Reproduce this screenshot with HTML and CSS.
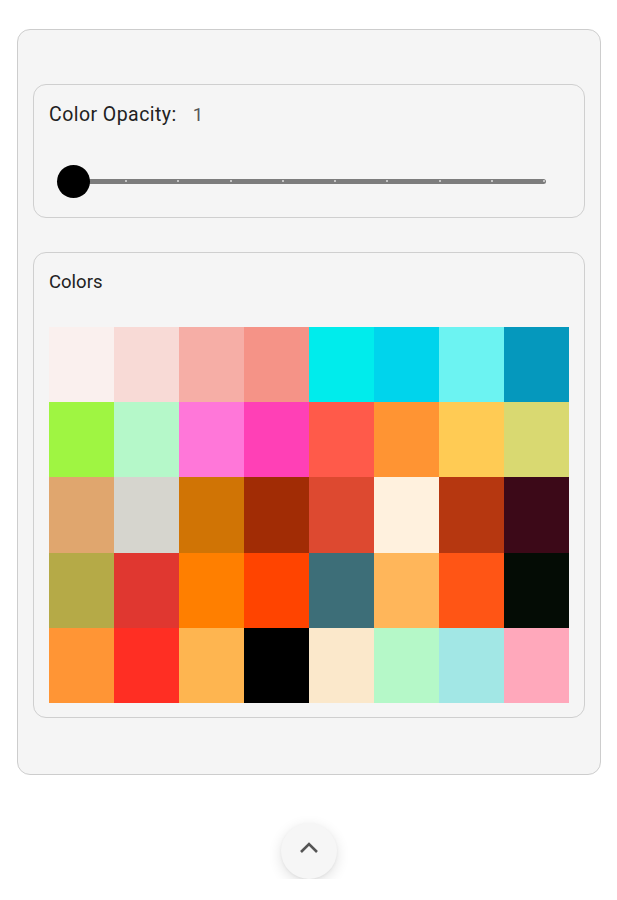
FILE: index.html
```html
<!DOCTYPE html>
<html>
<head>
<meta charset="utf-8">
<link rel="stylesheet" href="styles.css">
</head>
<body>
<div class="panel">
  <section class="card opacity-card">
    <div class="label-row"><span class="label label-lg">Color Opacity:</span><span class="value">1</span></div>
    <div class="slider">
      <div class="track">
        <div class="ticks">
          <i></i><i></i><i></i><i></i><i></i><i></i><i></i><i></i><i></i><i></i>
        </div>
      </div>
      <div class="thumb"></div>
    </div>
  </section>
  <section class="card colors-card">
    <div class="label">Colors</div>
    <div class="grid">
      <div style="background:#faf0ee"></div>
      <div style="background:#f8dad6"></div>
      <div style="background:#f6aea6"></div>
      <div style="background:#f59387"></div>
      <div style="background:#00ecec"></div>
      <div style="background:#00d4ec"></div>
      <div style="background:#6cf3f2"></div>
      <div style="background:#0598bd"></div>

      <div style="background:#9ff542"></div>
      <div style="background:#b5f8c9"></div>
      <div style="background:#ff77d9"></div>
      <div style="background:#ff40b6"></div>
      <div style="background:#ff5a4a"></div>
      <div style="background:#ff9433"></div>
      <div style="background:#ffcb54"></div>
      <div style="background:#d9d971"></div>

      <div style="background:#e0a66e"></div>
      <div style="background:#d6d5ce"></div>
      <div style="background:#d07405"></div>
      <div style="background:#a12c05"></div>
      <div style="background:#dd4930"></div>
      <div style="background:#fff1de"></div>
      <div style="background:#b63710"></div>
      <div style="background:#3c0918"></div>

      <div style="background:#b5aa47"></div>
      <div style="background:#e03730"></div>
      <div style="background:#ff7f00"></div>
      <div style="background:#ff4400"></div>
      <div style="background:#3d6e78"></div>
      <div style="background:#ffb65a"></div>
      <div style="background:#ff5515"></div>
      <div style="background:#040c05"></div>

      <div style="background:#ff9535"></div>
      <div style="background:#ff2e23"></div>
      <div style="background:#feb550"></div>
      <div style="background:#000000"></div>
      <div style="background:#fbe8cb"></div>
      <div style="background:#b5f8c8"></div>
      <div style="background:#a2e7e5"></div>
      <div style="background:#ffa8bb"></div>
    </div>
  </section>
</div>
<div class="fab-row">
  <button class="fab" aria-label="Collapse">
    <svg width="24" height="24" viewBox="0 0 24 24"><polyline points="4,16 12,8 20,16" fill="none" stroke="#555" stroke-width="2.6" stroke-linecap="butt" stroke-linejoin="miter"/></svg>
  </button>
</div>
</body>
</html>
```
FILE: styles.css
```css
* { box-sizing: border-box; }
html, body { margin: 0; padding: 0; background: #ffffff; }
body {
  font-family: Roboto, "Noto Sans", sans-serif;
  color: #222;
  width: 617px;
}
.panel {
  margin: 29px 16px 0 17px;
  height: 746px;
  border: 1px solid #cdcdcd;
  border-radius: 13px;
  background: #f5f5f5;
  padding: 54px 15px 0 15px;
  display: flex;
  flex-direction: column;
  gap: 34px;
}
.card {
  border: 1px solid #cfcfcf;
  border-radius: 13px;
  background: #f5f5f5;
}
.label {
  font-size: 18.5px;
  line-height: 24px;
  color: #222;
}
.label-lg {
  font-size: 19.5px;
  letter-spacing: 0.45px;
}
.opacity-card {
  height: 134px;
  padding: 18px 15px 0 15px;
}
.label-row {
  display: flex;
  align-items: baseline;
  gap: 16px;
}
.value {
  font-size: 18.5px;
  line-height: 24px;
  color: #555;
}
.slider {
  position: relative;
  margin: 38px 8px 0 8px;
  height: 32px;
  display: flex;
  align-items: center;
  padding: 0 15px 0 16px;
}
.track {
  flex: 1;
  height: 5px;
  border-radius: 3px;
  background: #7d7d7d;
  display: flex;
  align-items: center;
}
.ticks {
  flex: 1;
  display: flex;
  justify-content: space-between;
  align-items: center;
  padding-right: 1px;
}
.ticks i {
  display: block;
  width: 2px;
  height: 2px;
  background: #c4c4c4;
}
.thumb {
  position: absolute;
  left: 0;
  top: 0;
  width: 33px;
  height: 33px;
  margin-top: -0.5px;
  border-radius: 50%;
  background: #000;
}
.colors-card {
  height: 466px;
  padding: 17px 15px 0 15px;
}
.grid {
  margin-top: 33px;
  height: 376px;
  display: grid;
  grid-template-columns: repeat(8, 1fr);
  grid-template-rows: repeat(5, 1fr);
}
.fab-row {
  display: flex;
  justify-content: center;
  padding-top: 48px;
}
.fab {
  width: 56px;
  height: 56px;
  border-radius: 50%;
  border: none;
  background: #f6f6f6;
  box-shadow: 0 4px 14px rgba(0,0,0,0.12), 0 1px 3px rgba(0,0,0,0.05);
  display: flex;
  align-items: center;
  justify-content: center;
  padding: 0;
  margin-left: 1px;
}
.fab svg { display: block; margin-top: -6px; }
```
